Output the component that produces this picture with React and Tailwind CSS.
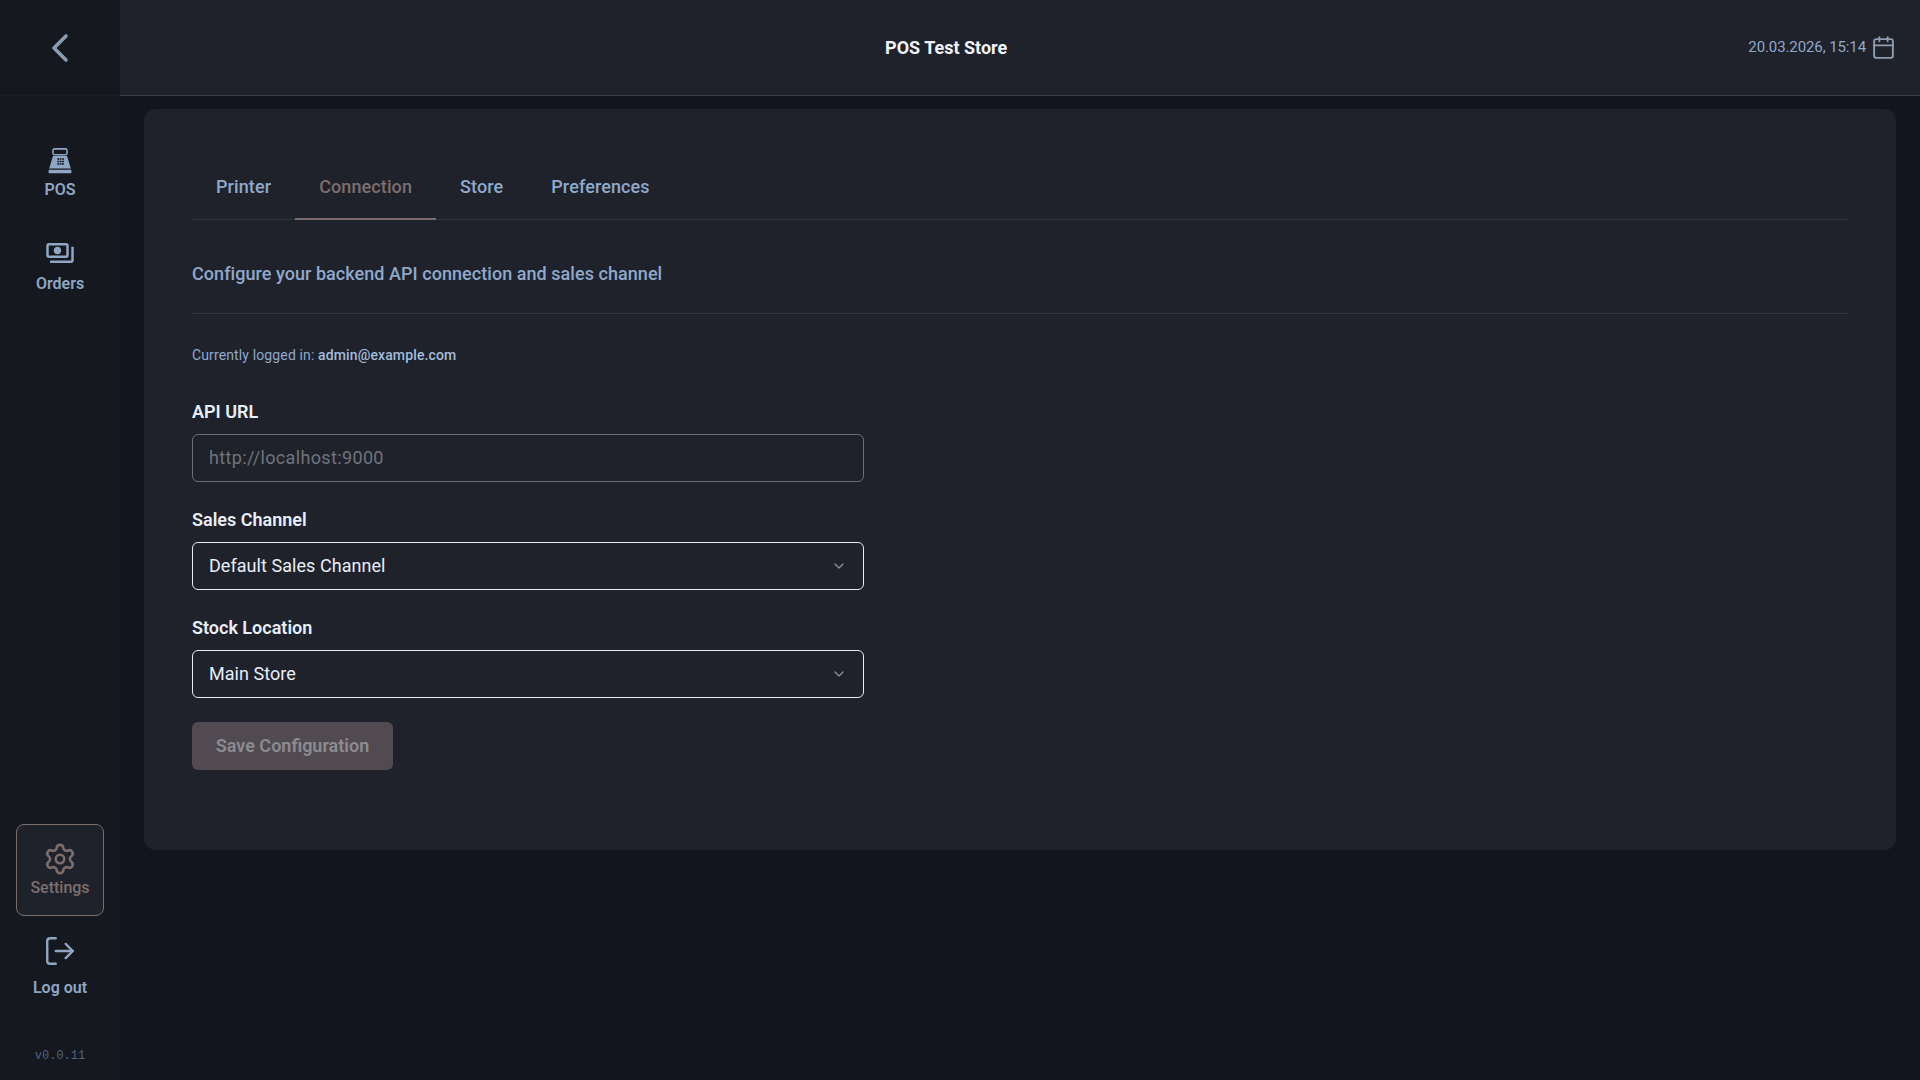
import React from "react";
import { Calendar, ChevronDown, ChevronLeft, LogOut, Settings } from "lucide-react";
import { MdOutlinePayments } from "react-icons/md";

const FONT = { fontFamily: 'Roboto, sans-serif' };

const PosIcon = () => (
  <svg width="26" height="26" viewBox="0 0 24 24" fill="currentColor">
    <rect x="5.5" y="0.8" width="13" height="5.400" rx="1.500" fill="none" stroke="currentColor" strokeWidth="1.400" />
    <path fillRule="evenodd" d="M5.500 7.400h13L22 19H2Zm4 2v1.400h1.700V9.400Zm2.200 0v1.400h1.700V9.400Zm2.200 0v1.400h1.700V9.400Zm-4.400 2.300v1.400h1.700v-1.400Zm2.200 0v1.400h1.700v-1.400Zm2.200 0v1.400h1.700v-1.400Zm-4.400 2.300v1.400h1.700V14Zm2.200 0v1.400h1.700V14Zm2.200 0v1.400h1.700V14Z" />
    <path d="M1.700 20h20.600l.3 2.200a1 1 0 0 1-1 1.100H2.400a1 1 0 0 1-1-1.100Z" />
  </svg>
);

const NavItem = ({ icon, label, active, gap = "gap-1.5" }) => (
  <div
    className={`flex h-[92px] w-[88px] flex-col items-center justify-center rounded-lg border ${gap} ${
      active
        ? "border-[#7d6e6e] bg-[#1f222b] font-medium text-[#7d6e6e]"
        : "border-transparent font-semibold text-[#8fa6c4]"
    }`}
  >
    {icon}
    <span className="text-base leading-5">{label}</span>
  </div>
);

const Tab = ({ label, active }) => (
  <div
    className={`-mb-px border-b-2 px-6 pb-[17px] pt-4 text-lg font-medium leading-7 tracking-[0.1px] ${
      active ? "border-[#7d6e6e] text-[#7d6e6e]" : "border-transparent text-[#8fa9cc]"
    }`}
  >
    {label}
  </div>
);

const Field = ({ label, value, placeholder }) => (
  <div className="flex flex-col gap-2">
    <label className="text-lg font-semibold leading-7 text-[#e8eef7]">{label}</label>
    <div
      className={`flex h-12 w-[672px] items-center justify-between rounded-md border px-4 text-lg ${
        placeholder
          ? "border-[#6b6f78] tracking-[0.35px] text-[#70747c]"
          : "border-[#e8eaee] tracking-[0.05px] text-[#e8eef7]"
      }`}
    >
      <span>{placeholder || value}</span>
      {!placeholder && <ChevronDown size={16} className="text-[#8a8e97]" />}
    </div>
  </div>
);

export default function App() {
  return (
    <div style={FONT} className="flex h-screen w-full bg-[#12151d]">
      <aside className="flex w-[120px] shrink-0 flex-col items-center bg-[#15181f] pb-4">
        <div className="flex h-24 w-full items-center justify-center border-b border-[#1b1e27] text-[#8a9ab3]">
          <ChevronLeft size={48} strokeWidth={1.8} />
        </div>
        <div className="mt-[32px] flex flex-col items-center">
          <NavItem icon={<PosIcon />} label="POS" />
          <NavItem icon={<MdOutlinePayments size={30} />} label="Orders" />
        </div>
        <div className="mt-auto flex flex-col items-center">
          <NavItem icon={<Settings size={34} strokeWidth={1.8} />} label="Settings" active gap="gap-0.5" />
          <div className="mt-1">
            <NavItem icon={<LogOut size={34} strokeWidth={1.7} />} label="Log out" gap="gap-2.5" />
          </div>
        </div>
        <div className="mt-[36px] font-['Liberation_Mono'] text-xs text-[#4d6285]">v0.0.11</div>
      </aside>

      <div className="flex min-w-0 flex-1 flex-col">
        <header className="flex h-24 shrink-0 items-center justify-between border-b border-[#3a3d48] bg-[#1f222b] px-6">
          <div />
          <div className="text-lg font-bold text-[#f1f4f9]">POS Test Store</div>
          <div className="flex items-center gap-[5px] text-[15px] tracking-[-0.1px] text-[#8fa9cc]">
            <span>20.03.2026, 15:14</span>
            <Calendar size={25} strokeWidth={1.8} className="text-[#8f9db3]" />
          </div>
        </header>

        <main className="px-6 pt-[13px]">
          <section className="rounded-xl bg-[#1f222b] px-12 pb-20 pt-12">
            <div className="flex border-b border-[#33363f]">
              <Tab label="Printer" />
              <Tab label="Connection" active />
              <Tab label="Store" />
              <Tab label="Preferences" />
            </div>
            <p className="mt-[40px] text-lg font-medium leading-7 tracking-[0.05px] text-[#8fa9cc]">
              Configure your backend API connection and sales channel
            </p>
            <div className="mt-[25px] border-t border-[#33363f]" />
            <p className="mt-[31px] text-sm leading-5 tracking-[0.13px] text-[#8fa9cc]">
              Currently logged in: <span className="font-medium text-[#a3bcdb]">admin@example.com</span>
            </p>
            <div className="mt-[33px] flex flex-col gap-6">
              <Field label="API URL" placeholder="http://localhost:9000" />
              <Field label="Sales Channel" value="Default Sales Channel" />
              <Field label="Stock Location" value="Main Store" />
              <button className="h-12 w-[201px] rounded-md bg-[#514a50] text-lg font-semibold text-[#8c8b90]">
                Save Configuration
              </button>
            </div>
          </section>
        </main>
      </div>
    </div>
  );
}
